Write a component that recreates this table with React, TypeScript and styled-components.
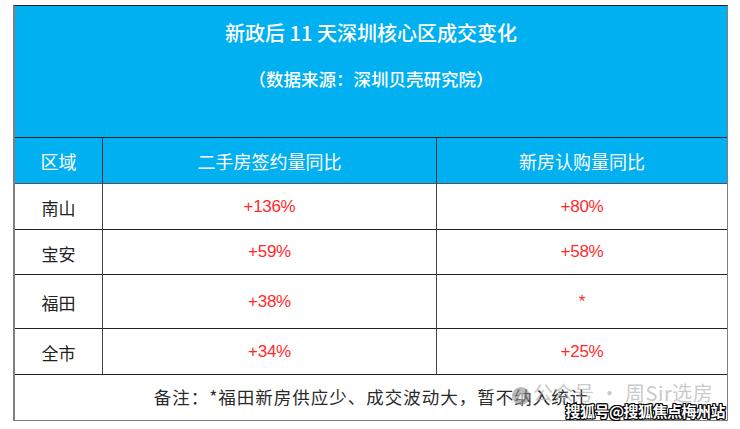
import styled, { createGlobalStyle } from 'styled-components';

const GlobalStyle = createGlobalStyle`
  html, body {
    margin: 0;
    padding: 0;
    background: #ffffff;
  }
  body {
    font-family: 'Noto Sans CJK SC', 'Noto Sans', 'Liberation Sans', sans-serif;
  }
`;

const rows = [
  { area: '南山', resale: '+136%', fresh: '+80%', h: 46 },
  { area: '宝安', resale: '+59%', fresh: '+58%', h: 45 },
  { area: '福田', resale: '+38%', fresh: '*', h: 54 },
  { area: '全市', resale: '+34%', fresh: '+25%', h: 46 },
];

export default function App() {
  return (
    <>
      <GlobalStyle />
      <Page>
        <Board>
          <TitleBand>
            <Title>新政后 11 天深圳核心区成交变化</Title>
            <Subtitle>（数据来源：深圳贝壳研究院）</Subtitle>
          </TitleBand>
          <Grid>
            <HeadCell>区域</HeadCell>
            <HeadCell>二手房签约量同比</HeadCell>
            <HeadCell $last>新房认购量同比</HeadCell>
            {rows.map((r) => (
              <Row key={r.area} $h={r.h}>
                <AreaCell>{r.area}</AreaCell>
                <ValueCell>{r.resale}</ValueCell>
                <ValueCell $last>{r.fresh}</ValueCell>
              </Row>
            ))}
          </Grid>
          <Footer>备注：*福田新房供应少、成交波动大，暂不纳入统计</Footer>
          <Watermark>
            <WaterLogo viewBox="0 0 20 20">
              <circle cx="10" cy="10" r="9" fill="#8c8c8c" />
              <path d="M6 12c1-3 3-5 7-5-1 2-1 4 1 6-3 0-6 0-8-1z" fill="#e8e8e8" />
            </WaterLogo>
            <WaterText>公众号 · 周Sir选房</WaterText>
          </Watermark>
          <SohuMark>搜狐号@搜狐焦点梅州站</SohuMark>
        </Board>
      </Page>
    </>
  );
}

const Page = styled.div`
  width: 740px;
  height: 429px;
  padding: 5px 0 0 13px;
  box-sizing: border-box;
`;

const Board = styled.div`
  position: relative;
  width: 715px;
  height: 416px;
  box-sizing: border-box;
  border: 1px solid #7f7f7f;
  border-left-width: 2px;
  border-top-color: #222;
  display: flex;
  flex-direction: column;
`;

const TitleBand = styled.div`
  height: 132px;
  background: #00b0f0;
  border-bottom: 1px solid #222;
  display: flex;
  flex-direction: column;
  align-items: center;
  padding-top: 14px;
  box-sizing: border-box;
  color: #ffffff;
`;

const Title = styled.div`
  font-size: 20px;
  font-weight: 500;
  line-height: 26px;
`;

const Subtitle = styled.div`
  margin-top: 21px;
  font-size: 17.5px;
  font-weight: 500;
  line-height: 24px;
`;

const Grid = styled.div`
  display: grid;
  grid-template-columns: 88px 334px 1fr;
`;

const HeadCell = styled.div<{ $last?: boolean }>`
  height: 46px;
  background: #00b0f0;
  color: #ffffff;
  font-size: 18px;
  display: flex;
  align-items: center;
  justify-content: center;
  border-right: ${(p) => (p.$last ? 'none' : '1px solid #333')};
  border-bottom: 1px solid #555;
  box-sizing: border-box;
`;

const Row = styled.div<{ $h: number }>`
  display: contents;
  & > div {
    height: ${(p) => p.$h}px;
  }
`;

const Cell = styled.div<{ $last?: boolean }>`
  display: flex;
  align-items: center;
  justify-content: center;
  box-sizing: border-box;
  border-right: ${(p) => (p.$last ? 'none' : '1px solid #444')};
  border-bottom: 1px solid #222;
`;

const AreaCell = styled(Cell)`
  font-size: 17px;
  color: #222;
  padding-top: 2px;
`;

const ValueCell = styled(Cell)`
  font-family: 'Liberation Sans', 'Noto Sans', sans-serif;
  font-size: 17px;
  color: #ff2b2b;
  letter-spacing: -0.3px;
`;

const Footer = styled.div`
  flex: 1;
  display: flex;
  align-items: center;
  justify-content: center;
  font-size: 17.5px;
  color: #2a2a2a;
  letter-spacing: 1px;
  padding-bottom: 2px;
`;

const Watermark = styled.div`
  position: absolute;
  left: 496px;
  top: 374px;
  display: flex;
  align-items: center;
  gap: 2px;
  opacity: 0.6;
`;

const WaterLogo = styled.svg`
  width: 20px;
  height: 20px;
  margin-top: 6px;
`;

const WaterText = styled.div`
  font-size: 20px;
  color: #a8a8a8;
  letter-spacing: 0.5px;
  line-height: 26px;
`;

const SohuMark = styled.div`
  position: absolute;
  right: 2px;
  bottom: 0px;
  font-size: 15px;
  font-weight: 700;
  color: #ffffff;
  line-height: 18px;
  letter-spacing: -0.5px;
  text-shadow: 1px 0 0 #000, -1px 0 0 #000, 0 1px 0 #000, 0 -1px 0 #000,
    1px 1px 0 #000, -1px -1px 0 #000, 1px -1px 0 #000, -1px 1px 0 #000;
`;
